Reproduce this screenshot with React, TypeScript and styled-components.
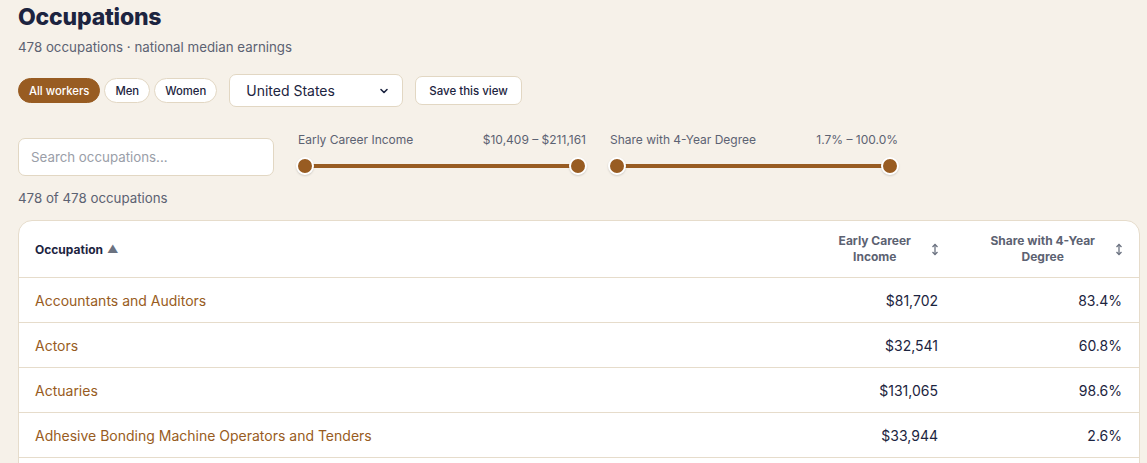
import React from "react";
import styled, { createGlobalStyle } from "styled-components";

const GlobalStyle = createGlobalStyle`
  body {
    margin: 0;
    background: #f6f1e9;
    font-family: Inter, "Noto Sans", "Liberation Sans", sans-serif;
    color: #1c2440;
  }
`;

type Row = { name: string; income: string; share: string };

const rows: Row[] = [
  { name: "Accountants and Auditors", income: "$81,702", share: "83.4%" },
  { name: "Actors", income: "$32,541", share: "60.8%" },
  { name: "Actuaries", income: "$131,065", share: "98.6%" },
  {
    name: "Adhesive Bonding Machine Operators and Tenders",
    income: "$33,944",
    share: "2.6%",
  },
  { name: "Administrative Services Managers", income: "$74,880", share: "61.2%" },
];

const SortIcon = () => (
  <svg width="8" height="13" viewBox="0 0 8 13" fill="none">
    <path d="M4 1.5v10" stroke="#6b7280" strokeWidth="1.3" />
    <path d="M1.5 4L4 1.5 6.5 4M1.5 9L4 11.5 6.5 9" stroke="#6b7280" strokeWidth="1.3" />
  </svg>
);

const Chevron = () => (
  <svg width="10" height="10" viewBox="0 0 10 10" fill="none">
    <path d="M2 3.5l3 3 3-3" stroke="#1c2440" strokeWidth="1.6" strokeLinecap="round" strokeLinejoin="round" />
  </svg>
);

const App: React.FC = () => {
  return (
    <Page>
      <GlobalStyle />
      <Title>Occupations</Title>
      <Subtitle>478 occupations · national median earnings</Subtitle>

      <Toolbar>
        <PillGroup>
          <Pill active>All workers</Pill>
          <Pill>Men</Pill>
          <Pill>Women</Pill>
        </PillGroup>
        <Select>
          <span>United States</span>
          <Chevron />
        </Select>
        <SaveButton>Save this view</SaveButton>
      </Toolbar>

      <Filters>
        <SearchBox>Search occupations...</SearchBox>
        <RangeFilter>
          <RangeHead>
            <span>Early Career Income</span>
            <span>$10,409 – $211,161</span>
          </RangeHead>
          <Track>
            <Thumb side="left" />
            <Thumb side="right" />
          </Track>
        </RangeFilter>
        <RangeFilter>
          <RangeHead>
            <span>Share with 4-Year Degree</span>
            <span>1.7% – 100.0%</span>
          </RangeHead>
          <Track>
            <Thumb side="left" />
            <Thumb side="right" />
          </Track>
        </RangeFilter>
      </Filters>

      <Count>478 of 478 occupations</Count>

      <TableCard>
        <HeadRow>
          <NameHead>
            Occupation <Caret>▲</Caret>
          </NameHead>
          <NumHead width={139}>
            <HeadText>
              Early Career
              <br />
              Income
            </HeadText>
            <SortIcon />
          </NumHead>
          <NumHead width={184}>
            <HeadText>
              Share with 4-Year
              <br />
              Degree
            </HeadText>
            <SortIcon />
          </NumHead>
        </HeadRow>
        {rows.map((r) => (
          <BodyRow key={r.name}>
            <NameCell>{r.name}</NameCell>
            <NumCell width={139}>{r.income}</NumCell>
            <NumCell width={184}>{r.share}</NumCell>
          </BodyRow>
        ))}
      </TableCard>
    </Page>
  );
};

export default App;

const Page = styled.div`
  padding: 2px 9px 0 18px;
  height: 463px;
  box-sizing: border-box;
  overflow: hidden;
`;

const Title = styled.h1`
  margin: 0;
  font-size: 23px;
  line-height: 30px;
  font-weight: 800;
  letter-spacing: -0.2px;
  color: #1c2440;
`;

const Subtitle = styled.div`
  margin-top: 5px;
  font-size: 13.3px;
  line-height: 20px;
  color: #5c6272;
`;

const Toolbar = styled.div`
  margin-top: 17px;
  display: flex;
  align-items: center;
  height: 33px;
`;

const PillGroup = styled.div`
  display: flex;
  gap: 4px;
  margin-right: 12px;
`;

const Pill = styled.div<{ active?: boolean }>`
  height: 25px;
  box-sizing: border-box;
  padding: 0 10px;
  display: flex;
  align-items: center;
  border-radius: 13px;
  font-size: 11.3px;
  font-weight: 500;
  background: ${(p) => (p.active ? "#985c22" : "#ffffff")};
  color: ${(p) => (p.active ? "#ffffff" : "#1c2440")};
  border: 1px solid ${(p) => (p.active ? "#985c22" : "#e2d7c3")};
`;

const Select = styled.div`
  width: 174px;
  height: 33px;
  box-sizing: border-box;
  padding: 0 13px 0 16px;
  display: flex;
  align-items: center;
  justify-content: space-between;
  background: #ffffff;
  border: 1px solid #e2d7c3;
  border-radius: 7px;
  font-size: 14px;
  color: #1c2440;
`;

const SaveButton = styled.div`
  margin-left: 12px;
  height: 29px;
  box-sizing: border-box;
  padding: 0 13px;
  display: flex;
  align-items: center;
  background: #ffffff;
  border: 1px solid #e2d7c3;
  border-radius: 7px;
  font-size: 11.5px;
  font-weight: 500;
  color: #1c2440;
`;

const Filters = styled.div`
  margin-top: 24px;
  display: flex;
  align-items: flex-start;
  gap: 24px;
`;

const SearchBox = styled.div`
  margin-top: 7px;
  width: 256px;
  height: 38px;
  box-sizing: border-box;
  padding: 0 12px;
  display: flex;
  align-items: center;
  background: #ffffff;
  border: 1px solid #e2d7c3;
  border-radius: 7px;
  font-size: 13.3px;
  color: #9a9ea8;
`;

const RangeFilter = styled.div`
  width: 288px;
  display: flex;
  flex-direction: column;
`;

const RangeHead = styled.div`
  display: flex;
  justify-content: space-between;
  font-size: 12px;
  line-height: 16px;
  margin-top: 1px;
  color: #5c6272;
`;

const Track = styled.div`
  position: relative;
  margin: 16px 0 0 7px;
  height: 4px;
  background: #985c22;
  border-radius: 2px;
`;

const Thumb = styled.div<{ side: "left" | "right" }>`
  position: absolute;
  top: 50%;
  ${(p) => (p.side === "left" ? "left: -9px;" : "right: -1px;")}
  width: 14px;
  height: 14px;
  margin-top: -9px;
  border-radius: 50%;
  background: #985c22;
  border: 2px solid #ffffff;
  box-shadow: 0 1px 2px rgba(0, 0, 0, 0.15);
`;

const Count = styled.div`
  margin-top: 12px;
  font-size: 13.3px;
  line-height: 20px;
  color: #5c6272;
`;

const TableCard = styled.div`
  margin-top: 12px;
  width: 1120px;
  background: #ffffff;
  border: 1px solid #e6dccb;
  border-radius: 14px;
  overflow: hidden;
`;

const HeadRow = styled.div`
  display: flex;
  height: 56px;
  align-items: center;
  border-bottom: 1px solid #e6dccb;
`;

const BodyRow = styled.div`
  display: flex;
  height: 44px;
  align-items: center;
  border-bottom: 1px solid #e6dccb;
  font-size: 14px;
`;

const NameHead = styled.div`
  flex: 1;
  padding-left: 16px;
  font-size: 12px;
  font-weight: 700;
  color: #1c2440;
  display: flex;
  align-items: center;
  gap: 4px;
`;

const Caret = styled.span`
  font-size: 11px;
  color: #6b7280;
`;

const NumHead = styled.div<{ width: number }>`
  width: ${(p) => p.width}px;
  box-sizing: border-box;
  padding-right: 16px;
  display: flex;
  justify-content: flex-end;
  align-items: center;
  gap: 20px;
`;

const HeadText = styled.div`
  text-align: center;
  font-size: 12px;
  line-height: 16px;
  font-weight: 700;
  color: #5c6272;
`;

const NameCell = styled.div`
  flex: 1;
  padding-left: 16px;
  color: #985c22;
`;

const NumCell = styled.div<{ width: number }>`
  width: ${(p) => p.width}px;
  box-sizing: border-box;
  padding-right: 17px;
  text-align: right;
  color: #1c2440;
`;
